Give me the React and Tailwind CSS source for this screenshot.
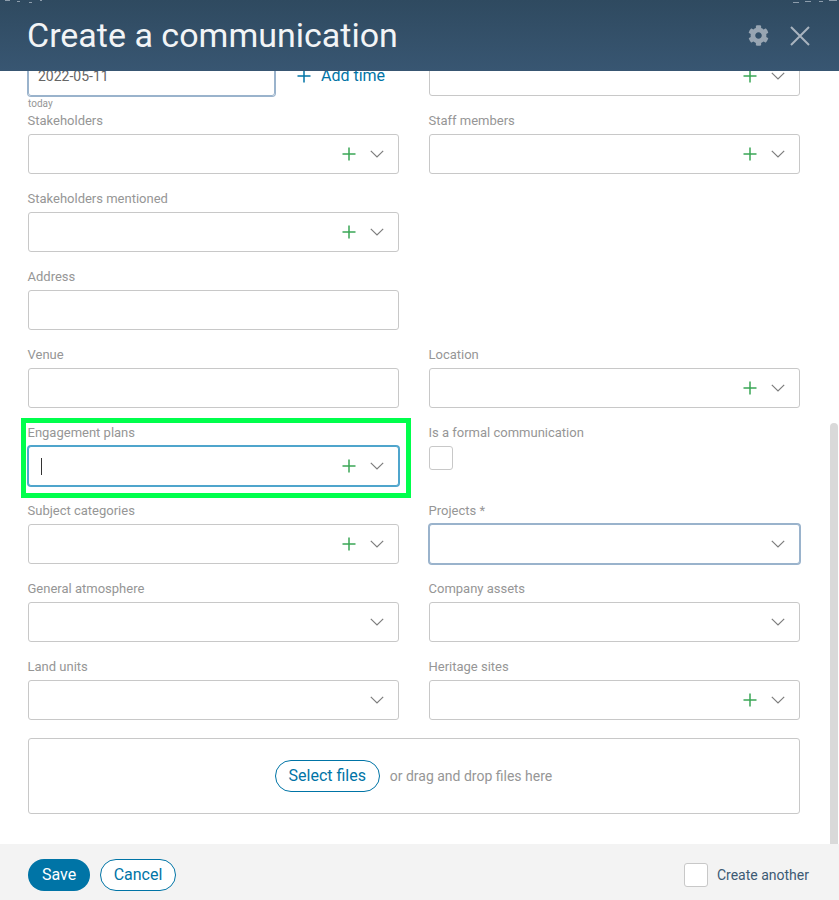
import {FaCog} from "react-icons/fa";

function Chevron() {
  return (
    <svg width="14" height="8" viewBox="0 0 14 8" fill="none" className="text-[#7d7d7d]">
      <path d="M0.8 0.8L7 7L13.2 0.8" stroke="currentColor" strokeWidth="1.2"/>
    </svg>
  );
}

function PlusIcon({className}) {
  return (
    <svg width="14" height="14" viewBox="0 0 14 14" fill="none" className={className}>
      <path d="M7 0.5V13.5M0.5 7H13.5" stroke="currentColor" strokeWidth="1.5"/>
    </svg>
  );
}

function Select({plus = true, className = "border-[#c8c8c8]", caret = false}) {
  return (
    <div className={`flex h-10 items-center rounded-[3px] border bg-white pr-[14px] ${className}`}>
      {caret && <div className="ml-3 h-[17px] w-px bg-[#333]"/>}
      <div className="flex-1"/>
      {plus && <PlusIcon className="mr-[14px] text-[#3aa655]"/>}
      <Chevron/>
    </div>
  );
}

function Field({label, children}) {
  return (
    <div>
      <div className="-ml-[0.5px] h-[22px] text-[13px] leading-[18px] text-[#969696]">{label}</div>
      {children}
    </div>
  );
}

// faint specks left along the top edge of the header
function TopSpecks({className, d}) {
  return (
    <svg width="70" height="4" viewBox="0 0 70 4" fill="none" className={className}>
      <path d={d} stroke="#8d9dac" strokeWidth="1"/>
    </svg>
  );
}

export default function App() {
  return (
    <div className="flex h-[900px] w-[839px] flex-col overflow-hidden bg-white font-['Roboto',sans-serif]">
      <div className="relative flex h-[71px] shrink-0 items-center justify-between bg-gradient-to-b from-[#2f4a60] to-[#385672] pl-[27px] pr-[29px]">
        <TopSpecks className="absolute left-0 top-0" d="M5 0.5H10M17 1.5H20M29 2.5H32M40 0.5H42"/>
        <TopSpecks className="absolute right-0 top-0" d="M24 2.5H30M36 1.5H42M50 1.5H54M60 0.5H68"/>
        <h1 className="text-[34px] leading-[71px] text-[#f2f4f6]">Create a communication</h1>
        <div className="flex items-center gap-[21px]">
          <FaCog className="text-[21px] text-[#98a5b2]"/>
          <svg width="20" height="20" viewBox="0 0 20 20" fill="none" className="text-[#a9b4bf]">
            <path d="M1 1L19 19M19 1L1 19" stroke="currentColor" strokeWidth="2"/>
          </svg>
        </div>
      </div>

      <div className="relative h-[773px] shrink-0 overflow-hidden">
        <div className="absolute bottom-0 right-[1px] top-[352px] w-2 rounded-t bg-[#d9d9d9]"/>
        <div className="mt-[-15px] pl-7 pr-[39px]">
          <div className="grid grid-cols-2 gap-x-[30px]">
            <div>
              <div className="flex items-center gap-[22px]">
                <div className="flex h-10 w-[247px] items-center rounded-[3px] border border-[#9ab3cc] pl-[9px] text-sm text-[#666] ring-1 ring-[#9ab3cc]">2022-05-11</div>
                <button className="flex items-center gap-[10px] text-base text-[#0074a6]">
                  <PlusIcon className="text-[#0074a6]"/>
                  Add time
                </button>
              </div>
              <div className="h-4 text-[10px] leading-4 text-[#969696]">today</div>
            </div>
            <Select/>
          </div>

          <div className="grid grid-cols-2 gap-x-[30px] gap-y-4">
            <Field label="Stakeholders"><Select/></Field>
            <Field label="Staff members"><Select/></Field>
            <Field label="Stakeholders mentioned"><Select/></Field>
            <div/>
            <Field label="Address"><div className="h-10 rounded-[3px] border border-[#c8c8c8]"/></Field>
            <div/>
            <Field label="Venue"><div className="h-10 rounded-[3px] border border-[#c8c8c8]"/></Field>
            <Field label="Location"><Select/></Field>
            <div className="relative">
              <div className="absolute -bottom-3 -left-[7px] -right-3 -top-[6px] border-[5px] border-[#00ff4c]"/>
              <Field label="Engagement plans">
                <Select caret className="border-[#4fa5cc] ring-1 ring-[#4fa5cc]"/>
              </Field>
            </div>
            <Field label="Is a formal communication">
              <div className="h-6 w-6 rounded-[3px] border border-[#c8c8c8]"/>
            </Field>
            <Field label="Subject categories"><Select/></Field>
            <Field label="Projects *"><Select plus={false} className="border-[#9ab3cc] ring-1 ring-[#9ab3cc]"/></Field>
            <Field label="General atmosphere"><Select plus={false}/></Field>
            <Field label="Company assets"><Select plus={false}/></Field>
            <Field label="Land units"><Select plus={false}/></Field>
            <Field label="Heritage sites"><Select/></Field>
          </div>

          <div className="mt-[18px] flex h-[76px] items-center justify-center gap-[10px] rounded-[3px] border border-[#c8c8c8] pr-px">
            <button className="h-8 w-[105px] rounded-full border border-[#0074a6] text-base text-[#0074a6]">Select files</button>
            <span className="text-sm text-[#969696]">or drag and drop files here</span>
          </div>
        </div>
      </div>

      <div className="flex h-14 shrink-0 items-center bg-[#f3f3f3] pl-7 pr-[30px] pt-[6px]">
        <button className="h-8 w-[62px] rounded-full bg-[#0074a6] text-base text-white">Save</button>
        <button className="ml-[10px] h-8 w-[76px] rounded-full border border-[#0074a6] bg-white text-base text-[#0074a6]">Cancel</button>
        <div className="ml-auto flex items-center gap-[9px]">
          <div className="h-6 w-6 rounded-[3px] border border-[#c8c8c8] bg-white"/>
          <span className="text-sm text-[#3d5a73]">Create another</span>
        </div>
      </div>
    </div>
  );
}
